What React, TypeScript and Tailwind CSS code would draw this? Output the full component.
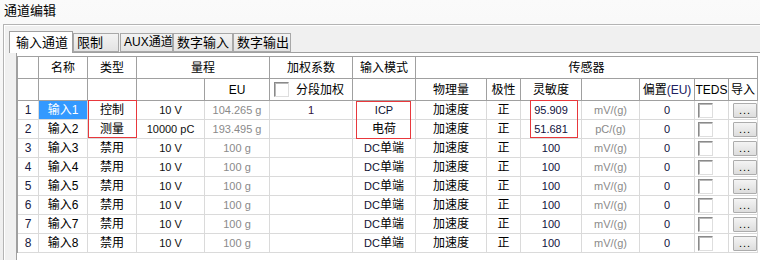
import React from "react";

const cols =
  "grid grid-cols-[21px_49px_49px_68px_65px_83px_63px_71px_34px_61px_58px_55px_34px_29px]";

const hd =
  "h-[22px] border-r border-b border-[#a0a0a0] flex items-center justify-center text-[12px] text-black";
const td =
  "h-[19px] border-r border-b border-[#dadada] flex items-center justify-center";

type Row = {
  name: string;
  type: string;
  range: string;
  eu: string;
  weight: string;
  mode: string;
  sens: string;
  unit: string;
};

const rows: Row[] = [
  { name: "输入1", type: "控制", range: "10 V", eu: "104.265 g", weight: "1", mode: "ICP", sens: "95.909", unit: "mV/(g)" },
  { name: "输入2", type: "测量", range: "10000 pC", eu: "193.495 g", weight: "", mode: "电荷", sens: "51.681", unit: "pC/(g)" },
  { name: "输入3", type: "禁用", range: "10 V", eu: "100 g", weight: "", mode: "DC单端", sens: "100", unit: "mV/(g)" },
  { name: "输入4", type: "禁用", range: "10 V", eu: "100 g", weight: "", mode: "DC单端", sens: "100", unit: "mV/(g)" },
  { name: "输入5", type: "禁用", range: "10 V", eu: "100 g", weight: "", mode: "DC单端", sens: "100", unit: "mV/(g)" },
  { name: "输入6", type: "禁用", range: "10 V", eu: "100 g", weight: "", mode: "DC单端", sens: "100", unit: "mV/(g)" },
  { name: "输入7", type: "禁用", range: "10 V", eu: "100 g", weight: "", mode: "DC单端", sens: "100", unit: "mV/(g)" },
  { name: "输入8", type: "禁用", range: "10 V", eu: "100 g", weight: "", mode: "DC单端", sens: "100", unit: "mV/(g)" },
];

function CheckBox() {
  return (
    <div className="h-[15px] w-[15px] border border-[#8a8a8a] border-r-[#dedede] border-b-[#dedede] bg-white shadow-[inset_1px_1px_0_#b8b8b8]" />
  );
}

function DotsButton() {
  return (
    <div className="flex h-[15px] w-[24px] items-end justify-center rounded-[1px] border border-[#acacac] bg-gradient-to-b from-[#f4f4f4] to-[#dddddd] pb-[2px] text-[11px] leading-[9px] tracking-[1px] text-black">
      ...
    </div>
  );
}

function Tab({ label, active, w, small }: { label: string; active?: boolean; w: string; small?: boolean }) {
  const size = small ? "text-[12px]" : "text-[13px]";
  return (
    <div
      className={
        active
          ? `relative z-10 -mb-px h-[22px] ${w} whitespace-nowrap border border-b-0 border-[#a0a0a0] bg-white pl-[6px] pt-[2px] ${size} leading-[18px]`
          : `h-[19px] ${w} whitespace-nowrap border border-[#a8a8a8] bg-gradient-to-b from-[#f3f3f3] to-[#e3e3e3] pl-[3px] ${size} leading-[17px]`
      }
    >
      {label}
    </div>
  );
}

export default function App() {
  return (
    <div className="relative h-[260px] w-[760px] overflow-hidden bg-gradient-to-b from-[#fafafa] to-[#eeeeee] font-['Liberation_Sans','Noto_Sans_CJK_SC',sans-serif] text-black">
      <div className="h-[24px] pl-[4px] pt-[2px] text-[13px] leading-[18px]">通道编辑</div>

      <div className="ml-[3px] h-[236px] border-l border-t border-[#b4b4b4] bg-[#f0f0f0] pt-[6px] shadow-[inset_1px_1px_0_#ffffff]">
        <div className="flex h-[21px] items-end pl-[5px]">
          <Tab label="输入通道" active w="w-[64px]" />
          <Tab label="限制" w="w-[46px]" />
          <div className="w-[1px]" />
          <Tab label="AUX通道" w="w-[53px]" small />
          <Tab label="数字输入" w="w-[60px]" />
          <Tab label="数字输出" w="w-[58px]" />
        </div>

        <div className="ml-[12px] h-[210px] border-l border-t border-[#a0a0a0] bg-white pt-[3px]">
          <div className={`${cols} w-[741px] border-l border-t border-[#a0a0a0]`}>
            {/* header row 1 */}
            <div className={hd} />
            <div className={hd}>名称</div>
            <div className={hd}>类型</div>
            <div className={`${hd} col-span-2`}>量程</div>
            <div className={hd}>加权系数</div>
            <div className={hd}>输入模式</div>
            <div className={`${hd} col-span-7`}>传感器</div>

            {/* header row 2 */}
            <div className={hd} />
            <div className={hd} />
            <div className={hd} />
            <div className={hd} />
            <div className={`${hd} text-[#202060]`}>EU</div>
            <div className={`${hd} justify-start gap-[7px] pl-[4px]`}>
              <CheckBox />
              <span>分段加权</span>
            </div>
            <div className={hd} />
            <div className={hd}>物理量</div>
            <div className={hd}>极性</div>
            <div className={hd}>灵敏度</div>
            <div className={hd} />
            <div className={hd}>
              偏置<span className="text-[12px] text-[#202060]">(EU)</span>
            </div>
            <div className={`${hd} text-[12px]`}>TEDS</div>
            <div className={hd}>导入</div>

            {rows.map((r, i) => (
              <React.Fragment key={r.name}>
                <div className={`${td} text-[12px] text-[#1a1a40]`}>{i + 1}</div>
                <div
                  className={`${td} text-[12px] ${i === 0 ? "bg-[#3399ff] text-white" : "text-black"}`}
                >
                  {r.name}
                </div>
                <div className={`${td} text-[12px]`}>{r.type}</div>
                <div className={`${td} text-[11px] text-[#101010]`}>{r.range}</div>
                <div className={`${td} text-[11px] text-[#8a8a8a]`}>{r.eu}</div>
                <div className={`${td} text-[11px] text-[#301040]`}>{r.weight}</div>
                <div className={`${td} text-[12px]`}>
                  {r.mode.startsWith("DC") ? (
                    <>
                      <span className="text-[11px] text-[#101030]">DC</span>
                      <span>单端</span>
                    </>
                  ) : r.mode === "ICP" ? (
                    <span className="text-[11px] text-[#101030]">ICP</span>
                  ) : (
                    r.mode
                  )}
                </div>
                <div className={`${td} text-[12px]`}>加速度</div>
                <div className={`${td} text-[12px]`}>正</div>
                <div className={`${td} text-[11px] text-[#101040]`}>{r.sens}</div>
                <div className={`${td} text-[11px] text-[#8a8a8a]`}>{r.unit}</div>
                <div className={`${td} text-[11px] text-[#101040]`}>0</div>
                <div className={`${td} justify-start pl-[3px]`}>
                  <CheckBox />
                </div>
                <div className={`${td} justify-end pt-[1px]`}>
                  <DotsButton />
                </div>
              </React.Fragment>
            ))}
          </div>
        </div>
      </div>

      {/* red annotation boxes */}
      <div className="absolute left-[88px] top-[100px] h-[38px] w-[49px] border border-[#e8383c]" />
      <div className="absolute left-[356px] top-[101px] h-[38px] w-[55px] border border-[#e8383c]" />
      <div className="absolute left-[530px] top-[100px] h-[38px] w-[48px] border border-[#e8383c]" />
    </div>
  );
}
